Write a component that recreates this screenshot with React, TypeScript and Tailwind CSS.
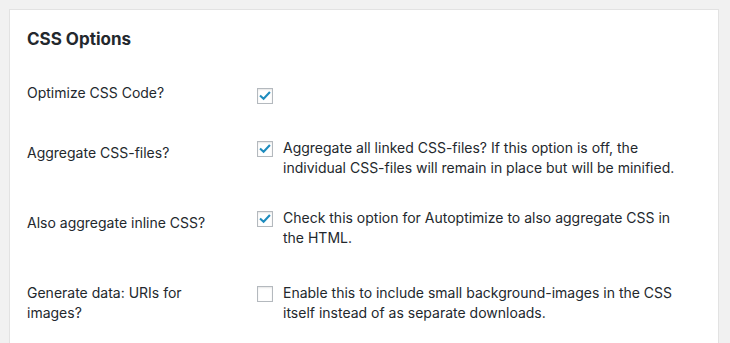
import React from "react";

type Option = {
    label: string;
    checked: boolean;
    description?: string;
};

const options: Option[] = [
    {label: "Optimize CSS Code?", checked: true},
    {
        label: "Aggregate CSS-files?",
        checked: true,
        description: "Aggregate all linked CSS-files? If this option is off, the individual CSS-files will remain in place but will be minified.",
    },
    {
        label: "Also aggregate inline CSS?",
        checked: true,
        description: "Check this option for Autoptimize to also aggregate CSS in the HTML.",
    },
    {
        label: "Generate data: URIs for images?",
        checked: false,
        description: "Enable this to include small background-images in the CSS itself instead of as separate downloads.",
    },
];

// Checkbox drawn like the WordPress admin one
const Checkbox: React.FC<{checked: boolean}> = ({checked}) => (
    <span className="flex h-4 w-4 shrink-0 items-center justify-center border border-[#b4b9be] bg-white shadow-[inset_0_1px_2px_rgba(0,0,0,0.1)]">
        {checked && (
            <svg width="14" height="14" viewBox="0 0 16 16" fill="none">
                <path d="M3.2 8.2 L6.4 11.2 L12.8 4.4" stroke="#1e8cbe" strokeWidth="2.4" strokeLinecap="square" />
            </svg>
        )}
    </span>
);

const App: React.FC = () => {
    return (
        <div
            className="h-[343px] w-[730px] overflow-hidden bg-[#f1f1f1] pl-[9px] pt-[9px] text-[#23282d]"
            style={{fontFamily: 'Inter, "Liberation Sans", Arial, sans-serif'}}
        >
            <div className="h-[400px] w-[710px] border border-[#e2e2e2] bg-white pl-[17px] pt-[18px]">
                <h3 className="text-[17px] font-bold leading-[22px]">CSS Options</h3>
                <div className="mt-[13px] flex flex-col text-[14px] leading-5">
                    {options.map((option, index) => (
                        <div key={option.label} className="flex items-stretch">
                            <div className="w-[230px] shrink-0 py-5 pr-[30px]">{option.label}</div>
                            <div className="flex items-center py-[15px]">
                                <div className="flex items-start">
                                    <div className={index === 0 ? "pt-[5px]" : "pt-[3px]"}>
                                        <Checkbox checked={option.checked} />
                                    </div>
                                    {option.description && (
                                        <p className="ml-[10px] w-[405px]">{option.description}</p>
                                    )}
                                </div>
                            </div>
                        </div>
                    ))}
                </div>
            </div>
        </div>
    );
};

export default App;
